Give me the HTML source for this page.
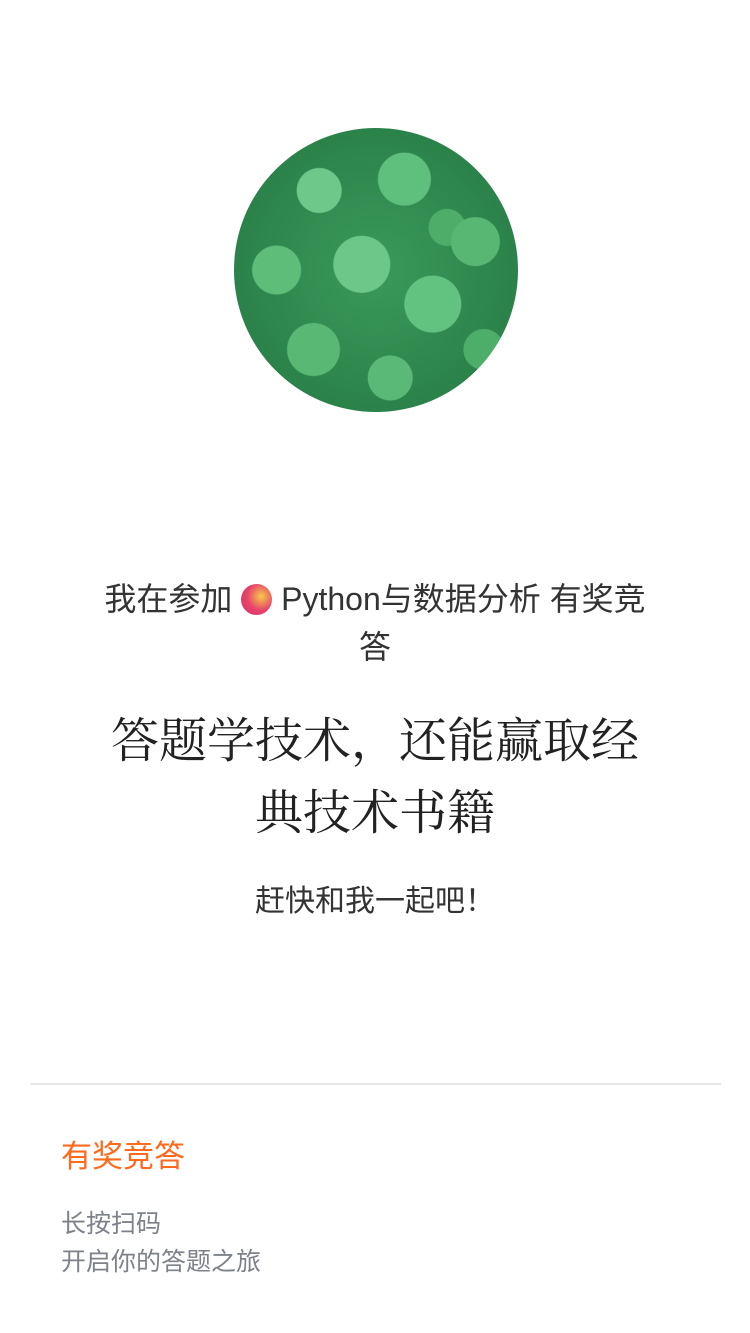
<!DOCTYPE html>
<html><head><meta charset="utf-8"><style>
html,body{margin:0;padding:0;background:#fff;width:750px;height:1333px;overflow:hidden;position:relative}
.s{font-family:"Liberation Sans","Noto Sans CJK SC",sans-serif}
.c{position:absolute;left:234px;top:128px;width:284px;height:284px;border-radius:50%;overflow:hidden;
background:
radial-gradient(circle at 30% 22%,#6cc98a 0 22px,transparent 23px),
radial-gradient(circle at 60% 18%,#5fc07d 0 26px,transparent 27px),
radial-gradient(circle at 85% 40%,#57b773 0 24px,transparent 25px),
radial-gradient(circle at 45% 48%,#6bc888 0 28px,transparent 29px),
radial-gradient(circle at 15% 50%,#5dbd79 0 24px,transparent 25px),
radial-gradient(circle at 70% 62%,#62c27f 0 28px,transparent 29px),
radial-gradient(circle at 28% 78%,#58b874 0 26px,transparent 27px),
radial-gradient(circle at 55% 88%,#5ab976 0 22px,transparent 23px),
radial-gradient(circle at 88% 78%,#4dae6a 0 20px,transparent 21px),
radial-gradient(circle at 75% 35%,#4ead69 0 18px,transparent 19px),
radial-gradient(circle at 50% 50%,#3a9a5a,#247843);}
.t1{position:absolute;left:95px;width:560px;top:575px;text-align:center;font-size:32px;line-height:48px;color:#333}
.dot{display:inline-block;width:31px;height:31px;border-radius:50%;background:radial-gradient(circle at 65% 40%,#f7c94a,#e8456b 50%,#d52d6a);vertical-align:-5px}
.t2{position:absolute;left:100px;width:550px;top:706px;text-align:center;font-family:"Liberation Serif","Noto Serif CJK SC",serif;font-size:48px;line-height:72px;color:#222}
.t3{position:absolute;left:0;width:750px;top:880px;text-align:center;font-size:30px;line-height:44px;color:#333}
.hr{position:absolute;left:30px;width:691px;top:1083px;height:2px;background:#e8e8e8}
.o{position:absolute;left:61px;top:1136px;font-size:31px;line-height:42px;color:#ff6a1f}
.g{position:absolute;left:61px;top:1205px;font-size:25px;line-height:38px;color:#7d828a}
</style></head><body class="s">
<div class="c"></div>
<div class="t1">我在参加 <span class="dot"></span> Python与数据分析 有奖竞答</div>
<div class="t2">答题学技术，还能赢取经典技术书籍</div>
<div class="t3">赶快和我一起吧！</div>
<div class="hr"></div>
<div class="o">有奖竞答</div>
<div class="g">长按扫码<br>开启你的答题之旅</div>
</body></html>
